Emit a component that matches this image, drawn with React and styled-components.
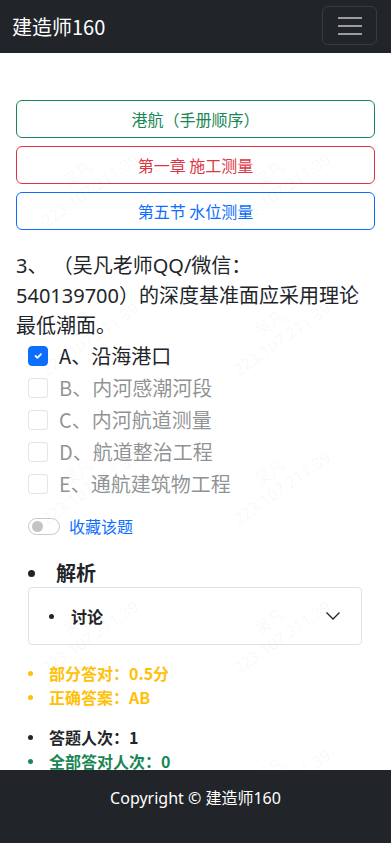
import React from 'react';
import styled, { createGlobalStyle } from 'styled-components';

const GlobalStyle = createGlobalStyle`
  html, body { margin: 0; padding: 0; background: #fff; }
  body { font-family: "Noto Sans", "Noto Sans CJK SC", sans-serif; color: #212529; font-size: 16px; line-height: 1.5; }
  * { box-sizing: border-box; }
`;

const Page = styled.div` min-height: 843px; padding-bottom: 73px; position: relative; overflow: hidden;`;
const Navbar = styled.nav` height: 53px; background-color: #212529; display: flex; align-items: center; justify-content: space-between; padding: 0 14px 0 12px;`;
const Brand = styled.a` color: #fff; font-size: 20px; line-height: 30px; text-decoration: none; font-family: "Noto Sans CJK SC", sans-serif;`;
const Toggler = styled.button` width: 55px; height: 39px; border: 1px solid rgba(255,255,255,0.1); border-radius: 6px; background: transparent; display: flex; flex-direction: column; align-items: center; justify-content: center; gap: 6px; padding: 0; margin-top: -2px;`;
const Bar = styled.span` display: block; width: 24px; height: 2px; background: rgba(255,255,255,0.55);`;

const Main = styled.main` padding: 47px 16px 0;`;
const Crumbs = styled.div` display: flex; flex-direction: column; gap: 8px;`;
const OutlineButton = styled.button` height: 38px; width: 100%; border: 1px solid ${p => p.$color}; color: ${p => p.$color}; background: transparent; border-radius: 6px; font-size: 16px; font-family: "Noto Sans CJK SC", sans-serif; cursor: pointer;`;

const Question = styled.h5` margin: 21px 0 0; font-size: 20px; font-weight: 400; line-height: 30px; font-family: "Noto Sans", "Noto Sans CJK SC", sans-serif;`;
const Options = styled.div` display: flex; flex-direction: column; padding-left: 12px; margin-top: -1px;`;
const OptionRow = styled.label` display: flex; align-items: center; height: 32px; gap: 11px; font-size: 20px; color: ${p => p.$disabled ? 'rgba(33,37,41,0.5)' : '#212529'}; font-family: "Noto Sans CJK SC", sans-serif;`;
const Box = styled.span` width: 20px; height: 20px; border-radius: 4px; flex-shrink: 0; display: flex; align-items: center; justify-content: center; background: ${p => p.$checked ? '#0d6efd' : '#fff'}; border: 1px solid ${p => p.$checked ? '#0d6efd' : 'rgba(222,226,230,0.9)'};`;

const SwitchRow = styled.div` display: flex; align-items: center; gap: 9px; padding-left: 12px; margin-top: 14px; height: 24px;`;
const Switch = styled.span` width: 32px; height: 17px; border: 1px solid #c8c8c8; border-radius: 9px; display: flex; align-items: center; padding-left: 3px;`;
const Knob = styled.span` width: 11px; height: 11px; border-radius: 50%; background: #c4c4c4;`;
const Link = styled.a` color: #0d6efd; font-size: 16px; font-family: "Noto Sans CJK SC", sans-serif; text-decoration: none;`;

const Item = styled.div` display: flex; align-items: center; gap: ${p => p.$gap || 16}px; font-weight: 700; font-size: ${p => p.$size || 16}px; color: ${p => p.$color || '#212529'}; line-height: ${p => p.$lh || 24}px; font-family: "Noto Sans CJK SC", sans-serif;`;
const Dot = styled.span` width: ${p => p.$d}px; height: ${p => p.$d}px; border-radius: 50%; background: currentColor; flex-shrink: 0;`;

const Analysis = styled.div` margin-top: 20px; padding-left: 12px;`;
const Accordion = styled.div` margin: -1px 0 0 12px; width: 334px; height: 58px; border: 1px solid #dee2e6; border-radius: 4px; display: flex; align-items: center; justify-content: space-between; padding: 0 20px;`;

const Stats = styled.div` padding-left: 12px; margin-top: ${p => p.$mt}px; display: flex; flex-direction: column;`;

const Footer = styled.footer` position: fixed; left: 0; right: 0; bottom: 0; height: 73px; background: #212529; color: #fff; padding: 16px 0; text-align: center; z-index: 2;`;
const FooterText = styled.p` margin: 0; font-size: 16px; line-height: 24px; font-family: "Noto Sans", "Noto Sans CJK SC", sans-serif;`;

const Watermarks = styled.div` position: absolute; top: 128px; left: 26px; display: grid; grid-template-columns: repeat(2, 192px); grid-auto-rows: 149px; pointer-events: none; z-index: 1;`;
const Mark = styled.div` transform: rotate(-35deg); transform-origin: 0 0; margin-top: 70px; color: rgba(0,0,0,0.04); font-size: 16px; line-height: 20px; white-space: nowrap; font-family: "Noto Sans", "Noto Sans CJK SC", sans-serif;`;
const MarkName = styled.div` padding-left: 40px;`;

const options = [
  { text: 'A、沿海港口', checked: true },
  { text: 'B、内河感潮河段' },
  { text: 'C、内河航道测量' },
  { text: 'D、航道整治工程' },
  { text: 'E、通航建筑物工程' },
];

function Check() {
  return (
    <svg width="12" height="12" viewBox="0 0 20 20">
      <path d="M6 10l3 3l6-6" fill="none" stroke="#fff" strokeWidth="3" strokeLinecap="round" strokeLinejoin="round" />
    </svg>
  );
}

export default function App() {
  return (
    <Page>
      <GlobalStyle />
      <Navbar>
        <Brand href="#">建造师160</Brand>
        <Toggler aria-label="menu"><Bar /><Bar /><Bar /></Toggler>
      </Navbar>
      <Main>
        <Crumbs>
          <OutlineButton $color="#198754">港航（手册顺序）</OutlineButton>
          <OutlineButton $color="#dc3545">第一章 施工测量</OutlineButton>
          <OutlineButton $color="#0d6efd">第五节 水位测量</OutlineButton>
        </Crumbs>
        <Question>3、 （吴凡老师QQ/微信：<br />540139700）的深度基准面应采用理论最低潮面。</Question>
        <Options>
          {options.map(o => (
            <OptionRow key={o.text} $disabled={!o.checked}>
              <Box $checked={o.checked}>{o.checked && <Check />}</Box>
              {o.text}
            </OptionRow>
          ))}
        </Options>
        <SwitchRow>
          <Switch><Knob /></Switch>
          <Link href="#">收藏该题</Link>
        </SwitchRow>
        <Analysis>
          <Item $size={20} $gap={21} $lh={30}><Dot $d={7} />解析</Item>
        </Analysis>
        <Accordion>
          <Item $gap={17}><Dot $d={5} />讨论</Item>
          <svg width="16" height="10" viewBox="0 0 16 10">
            <path d="M1.5 1.5L8 8l6.5-6.5" fill="none" stroke="#212529" strokeWidth="1.3" />
          </svg>
        </Accordion>
        <Stats $mt={16}>
          <Item $color="#ffc107"><Dot $d={5} />部分答对：0.5分</Item>
          <Item $color="#ffc107"><Dot $d={5} />正确答案：AB</Item>
        </Stats>
        <Stats $mt={16}>
          <Item><Dot $d={5} />答题人次：1</Item>
          <Item $color="#198754"><Dot $d={5} />全部答对人次：0</Item>
        </Stats>
      </Main>
      <Watermarks>
        {Array.from({ length: 10 }).map((_, i) => (
          <Mark key={i}>
            <MarkName>吴凡</MarkName>
            <div>223.107.211.39</div>
          </Mark>
        ))}
      </Watermarks>
      <Footer>
        <FooterText>Copyright © 建造师160</FooterText>
      </Footer>
    </Page>
  );
}
